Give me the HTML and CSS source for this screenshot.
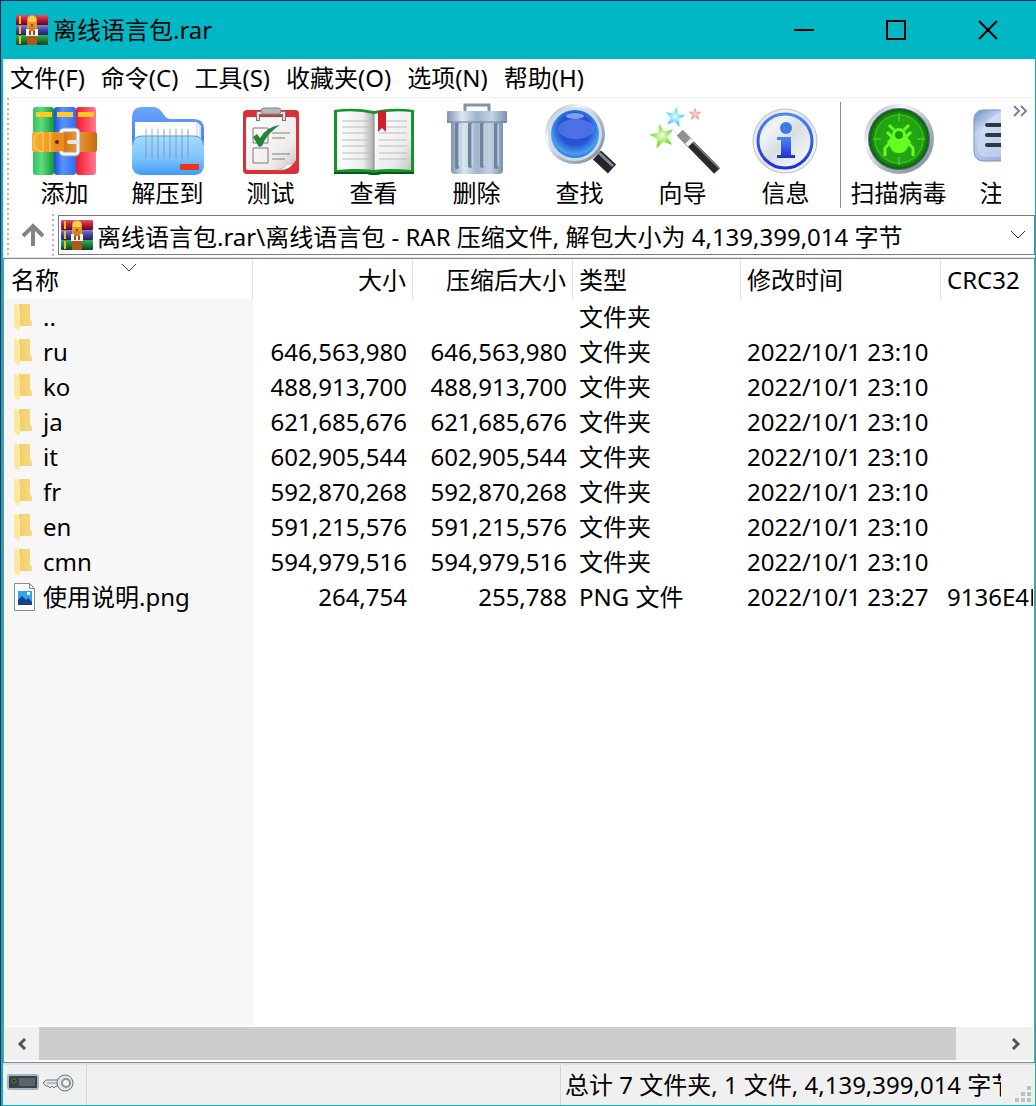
FILE: index.html
```html
<!DOCTYPE html>
<html lang="zh-CN">
<head>
<meta charset="utf-8">
<title>离线语言包.rar</title>
<link rel="stylesheet" href="styles.css">
</head>
<body>
<svg class="defs" aria-hidden="true">
  <defs>
    <linearGradient id="gr"><stop offset="0" stop-color="#2fc45c"/><stop offset=".4" stop-color="#5fdc7c"/><stop offset="1" stop-color="#12973c"/></linearGradient>
    <linearGradient id="bl"><stop offset="0" stop-color="#1b50d8"/><stop offset=".4" stop-color="#5a94ff"/><stop offset="1" stop-color="#2f6df0"/></linearGradient>
    <linearGradient id="rd"><stop offset="0" stop-color="#e0202c"/><stop offset=".4" stop-color="#ff3c50"/><stop offset="1" stop-color="#ff7d92"/></linearGradient>
    <linearGradient id="belt"><stop offset="0" stop-color="#f7b030"/><stop offset=".3" stop-color="#f09a22"/><stop offset=".5" stop-color="#d87312"/><stop offset=".7" stop-color="#f39a28"/><stop offset="1" stop-color="#c76a12"/></linearGradient>
    <linearGradient id="fold" x2="0" y2="1"><stop offset="0" stop-color="#a8dcff"/><stop offset=".6" stop-color="#7cc2fc"/><stop offset="1" stop-color="#3e9cf6"/></linearGradient>
    <linearGradient id="foldb" x2="0" y2="1"><stop offset="0" stop-color="#6aa6ff"/><stop offset="1" stop-color="#3566e8"/></linearGradient>
    <linearGradient id="paper" x2="1" y2="1"><stop offset="0" stop-color="#fff"/><stop offset=".7" stop-color="#ececec"/><stop offset="1" stop-color="#c4c4c4"/></linearGradient>
    <linearGradient id="page"><stop offset="0" stop-color="#fff"/><stop offset=".7" stop-color="#eee"/><stop offset="1" stop-color="#aaa"/></linearGradient>
    <linearGradient id="steel"><stop offset="0" stop-color="#7f95b0"/><stop offset=".25" stop-color="#dbe7f2"/><stop offset=".5" stop-color="#9fb3ca"/><stop offset=".75" stop-color="#c4d3e2"/><stop offset="1" stop-color="#7b91ac"/></linearGradient>
    <linearGradient id="metal" x2="1" y2="1"><stop offset="0" stop-color="#8d9bab"/><stop offset=".3" stop-color="#f5f8fb"/><stop offset=".6" stop-color="#aab6c4"/><stop offset="1" stop-color="#7b8796"/></linearGradient>
    <radialGradient id="lens" cx=".5" cy=".4" r=".65"><stop offset="0" stop-color="#2f55d8"/><stop offset=".5" stop-color="#2353d2"/><stop offset=".8" stop-color="#4aa0f0"/><stop offset="1" stop-color="#1c4fbe"/></radialGradient>
    <linearGradient id="info" x2="0" y2="1"><stop offset="0" stop-color="#4b88ee"/><stop offset="1" stop-color="#1f2fdc"/></linearGradient>
    <linearGradient id="disc" x2="1" y2="1"><stop offset="0" stop-color="#c6d0da"/><stop offset=".3" stop-color="#f2f4f6"/><stop offset=".5" stop-color="#d8dee4"/><stop offset=".8" stop-color="#f4f6f8"/><stop offset="1" stop-color="#b4c0cc"/></linearGradient>
    <radialGradient id="radar"><stop offset="0" stop-color="#25b010"/><stop offset=".8" stop-color="#22a012"/><stop offset="1" stop-color="#0b5d0a"/></radialGradient>
    <radialGradient id="sg"><stop offset="0" stop-color="#f2ffd8"/><stop offset="1" stop-color="#5fdb14"/></radialGradient>
    <radialGradient id="sc"><stop offset="0" stop-color="#e2fdff"/><stop offset="1" stop-color="#2cc9f4"/></radialGradient>
    <radialGradient id="sr"><stop offset="0" stop-color="#ffd6d6"/><stop offset="1" stop-color="#f08488"/></radialGradient>
    <linearGradient id="note" x2="1" y2="1"><stop offset="0" stop-color="#6e8fc8"/><stop offset=".25" stop-color="#c3d3ee"/><stop offset="1" stop-color="#7f9fd6"/></linearGradient>
    <linearGradient id="b1" x2="0" y2="1"><stop offset="0" stop-color="#e05470"/><stop offset=".5" stop-color="#b81838"/><stop offset="1" stop-color="#5e0a1c"/></linearGradient>
    <linearGradient id="b2" x2="0" y2="1"><stop offset="0" stop-color="#7f80d8"/><stop offset=".5" stop-color="#4444a0"/><stop offset="1" stop-color="#22225c"/></linearGradient>
    <linearGradient id="b3" x2="0" y2="1"><stop offset="0" stop-color="#44a860"/><stop offset=".5" stop-color="#15803a"/><stop offset="1" stop-color="#08401c"/></linearGradient>
    <linearGradient id="fy"><stop offset="0" stop-color="#f3cf6a"/><stop offset="1" stop-color="#f8da84"/></linearGradient>
    <path id="star" d="M0-12 3-4 12-4 5 2 8 11 0 6-8 11-5 2-12-4-3-4z"/>
    <symbol id="rar" viewBox="0 0 32 30">
      <rect width="32" height="10" rx="1" fill="url(#b1)"/><rect y="10" width="32" height="10" rx="1" fill="url(#b2)"/><rect y="20" width="32" height="10" rx="1" fill="url(#b3)"/>
      <path d="M3 1h2v8H3zM3 11h2v8H3zM3 21h2v8H3z" fill="#f2c21c"/>
      <path d="M11 4q1-4 5-4t5 4v10H11z" fill="#e8962c"/><path d="M11 21h10v9H11z" fill="#b0581c"/><path d="M12 3q4-4 8 0v4h-8z" fill="#ffd04a"/>
      <path d="M10 14h12v7H10z" fill="#f4f4f4"/><path d="M13 11h6v5h-6z" fill="#d77a20"/><circle cx="16" cy="10" r="1" fill="#5a3210"/><path d="M13 16h2v4h-2zM17 16h2v4h-2z" fill="#8a5030"/>
    </symbol>
    <symbol id="folder" viewBox="0 0 22 28">
      <path d="M5 1h11v15l2 3v4H5z" fill="url(#fy)"/><path d="M0 1h3l3 5v17l-1 5-5-4z" fill="#ffe7a0"/>
    </symbol>
  </defs>
</svg>

<header class="titlebar">
  <svg class="app-icon" aria-hidden="true"><use href="#rar"/></svg>
  <h1 class="title">离线语言包.rar</h1>
  <div class="window-buttons">
    <button class="winbtn" aria-label="最小化"><svg width="20" height="20"><path d="M0 10h20" stroke="#000" stroke-width="2"/></svg></button>
    <button class="winbtn" aria-label="最大化"><svg width="20" height="20"><rect x="1" y="1" width="18" height="18" fill="none" stroke="#000" stroke-width="2"/></svg></button>
    <button class="winbtn" aria-label="关闭"><svg width="20" height="20"><path d="M1 1l18 18M19 1 1 19" stroke="#000" stroke-width="2"/></svg></button>
  </div>
</header>

<nav class="menubar">
  <button class="menu">文件(F)</button>
  <button class="menu">命令(C)</button>
  <button class="menu">工具(S)</button>
  <button class="menu">收藏夹(O)</button>
  <button class="menu">选项(N)</button>
  <button class="menu">帮助(H)</button>
</nav>

<div class="bars">
  <div class="grip"></div>
  <div class="bars-main">
    <div class="toolbar">
      <div class="tools">
        <button class="tool"><svg class="tool-icon" viewBox="23 102 84 76" aria-hidden="true">
          <rect x="33" y="107" width="21" height="68" rx="3" fill="url(#gr)"/><rect x="54" y="107" width="22" height="68" rx="3" fill="url(#bl)"/><rect x="76" y="107" width="20" height="68" rx="3" fill="url(#rd)"/>
          <path d="M36 112h16v5H36zM57 112h16v5H57zM78 112h16v5H78z" fill="#ffcb22"/>
          <rect x="32" y="132" width="65" height="20" rx="2" fill="url(#belt)"/><path d="M43 132q-9 1-9 10t9 10M43 132v20M50 132v20" fill="none" stroke="#ffd46a" stroke-width="1"/>
          <rect x="61" y="130" width="17" height="24" rx="3" fill="none" stroke="#9aa0a8" stroke-width="5"/><rect x="61" y="130" width="17" height="24" rx="3" fill="none" stroke="#f3f4f6" stroke-width="3"/>
          <path d="M54 133h10v18H54z" fill="#e88a1e"/><circle cx="57" cy="142" r="2" fill="#5a2c08"/><rect x="67" y="140" width="12" height="4" rx="2" fill="#e4e6ea"/>
        </svg>添加</button>
        <button class="tool"><svg class="tool-icon" viewBox="126 102 84 76" aria-hidden="true">
          <path d="M132 118q0-11 10-11h11q5 0 9 5 4 7 8 7h24q10 0 10 10v36h-72z" fill="url(#foldb)"/><path d="M135 122h62l4 4v20h-66z" fill="#fff"/><path d="M197 122v24M200 125v20" stroke="#b8c4dc"/>
          <rect x="132" y="136" width="72" height="39" rx="9" fill="url(#fold)"/><path d="M133 145q0-9 9-9h52q9 0 9 9" fill="none" stroke="#4f9df0"/>
          <path d="M146 129v30M152 129v30M158 129v30M164 129v30M170 129v30M176 129v30M182 129v30M188 129v30" stroke="#7892ae" stroke-opacity=".4" stroke-width="2"/><rect x="180" y="164" width="19" height="6" rx="1" fill="#ee3418"/>
        </svg>解压到</button>
        <button class="tool"><svg class="tool-icon" viewBox="229 102 84 76" aria-hidden="true">
          <rect x="243" y="110" width="56" height="64" rx="4" fill="#db2f35"/><path d="M248 117h46q2 0 2 2v41q-8 10-18 10h-30q-2 0-2-2v-49q0-2 2-2z" fill="url(#paper)"/><path d="M296 160q-3 6-9 4-1 4-9 6 12 1 18-10z" fill="#fff" stroke="#aaa" stroke-width=".5"/>
          <path d="M258 121v-8h26v8" fill="none" stroke="#777" stroke-width="4"/><path d="M258 120v-7h26v7" fill="none" stroke="#ddd" stroke-width="2"/><rect x="261" y="108" width="20" height="6" rx="3" fill="#b6b9bb" stroke="#858585"/>
          <path d="M253 128h15v15h-15zM253 148h15v15h-15z" fill="none" stroke="#8b7777"/><path d="M272 133h18M272 138h13M272 154h18M272 159h13" stroke="#8e7b7b"/><path d="M253 137l4-3 3 4q6-11 20-13-13 8-18 21l-3 1z" fill="#238634"/>
        </svg>测试</button>
        <button class="tool"><svg class="tool-icon" viewBox="332 102 84 76" aria-hidden="true">
          <path d="M334 110q20-3 40 1 20-4 40-1v64h-33q-7 2-14 0h-33z" fill="#12962a"/><path d="M334 172h34q6 2 12 0h34v2h-33q-7 2-14 0h-33z" fill="#075814"/><path d="M337 112q20-2 37 2v56q-17-2-37 0z" fill="url(#page)"/><path d="M411 112q-20-2-37 2v56q17-2 37 0z" fill="url(#paper)"/>
          <path d="M342 121h28M342 127h28M342 133h28M342 140h28M342 146h28M342 153h28M342 159h28M379 121h28M379 127h28M379 133h28M379 140h28M379 146h28M379 153h28M379 159h28" stroke="#bcbcbc" stroke-width="1"/><path d="M374 114v56" stroke="#888"/><path d="M378 111h8v21l-4-4-4 4z" fill="#cf2027"/>
        </svg>查看</button>
        <button class="tool"><svg class="tool-icon" viewBox="435 102 84 76" aria-hidden="true">
          <path d="M465 112v-7h24v7" fill="none" stroke="#8494a8" stroke-width="3"/><path d="M451 122h52v48q0 4-4 4h-44q-4 0-4-4z" fill="url(#steel)"/><path d="M457 124v43M470 124v42M482 124v42M496 124v43" stroke="#6a84a2" stroke-width="4" stroke-linecap="round"/><path d="M459 124v42M472 124v42M484 124v42M498 124v42" stroke="#d8e4f0" stroke-width="1"/>
          <rect x="447" y="111" width="60" height="12" rx="1" fill="url(#steel)"/><path d="M447 122h60" stroke="#607993"/>
        </svg>删除</button>
        <button class="tool"><svg class="tool-icon" viewBox="538 102 84 76" aria-hidden="true">
          <path d="M597 155l15 14" stroke="#22252b" stroke-width="12"/><path d="M598 152l15 14" stroke="#858b94" stroke-width="3"/><circle cx="575" cy="134" r="30" fill="url(#metal)"/><circle cx="575" cy="134" r="27" fill="#c9dcec"/><circle cx="575" cy="134" r="24" fill="url(#lens)"/><ellipse cx="576" cy="129" rx="18" ry="10" fill="#829bff" fill-opacity=".4"/><ellipse cx="575" cy="116" rx="9" ry="3" fill="#d7edff" fill-opacity=".5"/>
        </svg>查找</button>
        <button class="tool"><svg class="tool-icon" viewBox="641 102 84 76" aria-hidden="true">
          <use href="#star" transform="translate(662 136) rotate(-12)" fill="url(#sg)"/><use href="#star" transform="translate(675 117) rotate(10) scale(.8)" fill="url(#sc)"/><use href="#star" transform="translate(695 114) scale(.55)" fill="url(#sr)"/>
          <path d="M680 133l37 38" stroke="#29292b" stroke-width="8"/><path d="M682 131l37 37" stroke="#77797d" stroke-width="2"/><path d="M680 133l10 10" stroke="#909296" stroke-width="8"/><path d="M688 141l3 3" stroke="#f2f2f2" stroke-width="8"/>
        </svg>向导</button>
        <button class="tool"><svg class="tool-icon" viewBox="744 102 84 76" aria-hidden="true">
          <circle cx="785" cy="141" r="32" fill="url(#disc)" stroke="#b7c1cb"/><circle cx="785" cy="141" r="27" fill="none" stroke="url(#info)" stroke-width="3"/><circle cx="786" cy="128" r="6" fill="#3f7be8"/><path d="M777 137h14v18h4v3h-18v-3h4v-15h-4z" fill="url(#info)"/>
        </svg>信息</button>
        <div class="separator"></div>
        <button class="tool wide"><svg class="tool-icon" viewBox="857 102 84 76" aria-hidden="true">
          <circle cx="899" cy="139" r="35" fill="url(#metal)"/><circle cx="899" cy="139" r="31" fill="#5d6874"/><circle cx="899" cy="139" r="30" fill="url(#radar)"/><circle cx="899" cy="139" r="24" fill="none" stroke="#3dcb24"/><path d="M899 113v8M899 157v8M873 139h8M917 139h8" stroke="#35c81d" stroke-width="2"/>
          <path d="M892 150l-5-8 4-5h16l4 5-5 8q-2 3-7 3t-7-3z" fill="#66ff22"/><circle cx="899" cy="135" r="7" fill="#66ff22"/><circle cx="899" cy="135" r="4" fill="#229a12"/><path d="M894 130l-5-5M904 130l5-5M892 137l-5-5M906 137l5-5M890 143l-5 5v8M908 143l5 5v8" fill="none" stroke="#66ff22" stroke-width="3"/>
        </svg>扫描病毒</button>
        <button class="tool wide"><svg class="tool-icon" viewBox="962 102 84 76" aria-hidden="true">
          <rect x="974" y="110" width="60" height="51" rx="9" fill="url(#note)" stroke="#7590ba"/><path d="M978 148q0-25 22-35h20v44h-36q-6-1-6-9z" fill="#e4ecf8" fill-opacity=".4"/><path d="M987 125h36M987 135h36M987 145h36" stroke="#2b3848" stroke-width="4" stroke-linecap="round"/>
        </svg>注释</button>
      </div>
      <button class="more" aria-label="更多"><svg width="16" height="12"><path d="M2 1l5 5-5 5M9 1l5 5-5 5" fill="none" stroke="#7c7cb4" stroke-width="2"/></svg></button>
    </div>
    <div class="addressbar">
      <button class="up" aria-label="向上"><svg width="24" height="24"><path d="M12 23V3M2 13 12 3l10 10" fill="none" stroke="#848484" stroke-width="4"/></svg></button>
      <div class="grip small"></div>
      <div class="address">
        <svg class="app-icon" aria-hidden="true"><use href="#rar"/></svg>
        <input class="path" aria-label="地址" value="离线语言包.rar\离线语言包 - RAR 压缩文件, 解包大小为 4,139,399,014 字节">
        <button class="drop" aria-label="展开"><svg width="14" height="8"><path d="M0 0l7 7 7-7" fill="none" stroke="#333"/></svg></button>
      </div>
    </div>
  </div>
</div>

<main class="list">
  <div class="rows">
    <table class="files">
      <colgroup><col class="c-name"><col class="c-size"><col class="c-size"><col class="c-type"><col class="c-time"><col class="c-crc"></colgroup>
      <thead><tr><th>名称<svg class="sort" width="14" height="8" aria-hidden="true"><path d="M0 0l7 7 7-7" fill="none" stroke="#444"/></svg></th><th class="num">大小</th><th class="num">压缩后大小</th><th>类型</th><th>修改时间</th><th>CRC32</th></tr></thead>
      <tbody>
        <tr><td><span class="name"><svg class="file-icon"><use href="#folder"/></svg>..</span></td><td></td><td></td><td>文件夹</td><td></td><td></td></tr>
        <tr><td><span class="name"><svg class="file-icon"><use href="#folder"/></svg>ru</span></td><td class="num">646,563,980</td><td class="num">646,563,980</td><td>文件夹</td><td>2022/10/1 23:10</td><td></td></tr>
        <tr><td><span class="name"><svg class="file-icon"><use href="#folder"/></svg>ko</span></td><td class="num">488,913,700</td><td class="num">488,913,700</td><td>文件夹</td><td>2022/10/1 23:10</td><td></td></tr>
        <tr><td><span class="name"><svg class="file-icon"><use href="#folder"/></svg>ja</span></td><td class="num">621,685,676</td><td class="num">621,685,676</td><td>文件夹</td><td>2022/10/1 23:10</td><td></td></tr>
        <tr><td><span class="name"><svg class="file-icon"><use href="#folder"/></svg>it</span></td><td class="num">602,905,544</td><td class="num">602,905,544</td><td>文件夹</td><td>2022/10/1 23:10</td><td></td></tr>
        <tr><td><span class="name"><svg class="file-icon"><use href="#folder"/></svg>fr</span></td><td class="num">592,870,268</td><td class="num">592,870,268</td><td>文件夹</td><td>2022/10/1 23:10</td><td></td></tr>
        <tr><td><span class="name"><svg class="file-icon"><use href="#folder"/></svg>en</span></td><td class="num">591,215,576</td><td class="num">591,215,576</td><td>文件夹</td><td>2022/10/1 23:10</td><td></td></tr>
        <tr><td><span class="name"><svg class="file-icon"><use href="#folder"/></svg>cmn</span></td><td class="num">594,979,516</td><td class="num">594,979,516</td><td>文件夹</td><td>2022/10/1 23:10</td><td></td></tr>
        <tr><td><span class="name"><svg class="file-icon" viewBox="0 0 22 28"><path d="M.5.500h15l5 5v22H.5z" fill="#fff" stroke="#8c8c8c"/><path d="M15.500.500v5h5" fill="none" stroke="#8c8c8c"/><rect x="4" y="8" width="14" height="14" fill="#2fa5ea"/><path d="M4 17l4-4 4 4 2-2 4 4v3H4z" fill="#1b3f8c"/><rect x="13" y="9" width="3" height="3" fill="#fff"/></svg>使用说明.png</span></td><td class="num">264,754</td><td class="num">255,788</td><td>PNG 文件</td><td>2022/10/1 23:27</td><td>9136E4B8</td></tr>
      </tbody>
    </table>
  </div>
  <div class="scrollbar">
    <button class="scroll-btn" aria-label="向左滚动"><svg width="10" height="12"><path d="M8 1 3 6l5 5" fill="none" stroke="#555" stroke-width="3"/></svg></button>
    <div class="track"><div class="thumb"></div></div>
    <button class="scroll-btn" aria-label="向右滚动"><svg width="10" height="12"><path d="M2 1l5 5-5 5" fill="none" stroke="#555" stroke-width="3"/></svg></button>
  </div>
</main>

<footer class="status">
  <div class="status-icons">
    <svg width="32" height="16" aria-hidden="true"><rect x="1" y="1" width="30" height="14" rx="2" fill="#3c4147" stroke="#a3b3c0" stroke-width="2"/><rect x="12" y="4" width="16" height="8" fill="#5c626a"/><circle cx="7" cy="7" r="2" fill="#123d0c" stroke="#4b8a36"/></svg>
    <svg width="32" height="18" aria-hidden="true"><path d="M20 6H4L1 9l3 3h2l2 2 2-2 2 2 2-2h7z" fill="#e4e8ea" stroke="#6c767c"/><path d="M5 9h14" stroke="#8a9499"/><circle cx="23" cy="9" r="8" fill="#dfe6e9" stroke="#6c767c"/><circle cx="24" cy="9" r="4" fill="#f2f2f2" stroke="#89949a" stroke-width="2"/></svg>
  </div>
  <div class="status-mid"></div>
  <div class="status-total"><span class="total-text">总计 7 文件夹, 1 文件, 4,139,399,014 字节</span></div>
  <svg class="resize" width="16" height="16" aria-hidden="true"><path d="M12 0h4v4h-4zM6 6h4v4H6zM12 6h4v4h-4zM0 12h4v4H0zM6 12h4v4H6zM12 12h4v4h-4z" fill="#bfbfbf"/></svg>
</footer>
</body>
</html>
```
FILE: styles.css
```css
* { box-sizing: border-box; }

body {
  margin: 0;
  min-height: 100vh;
  display: flex;
  flex-direction: column;
  padding: 1px 1px 1px 3px;
  background: linear-gradient(90deg, #0b2a5a 1px, #00b7c6 1px);
  border-top: 1px solid #0b2a5a;
  font: 24px/30px "Noto Sans", "Noto Sans CJK SC", sans-serif;
  color: #000;
}

svg { display: block; flex: none; }
.defs { position: absolute; width: 0; height: 0; }

button {
  font: inherit;
  color: inherit;
  background: none;
  border: 0;
  padding: 0;
}

.titlebar {
  display: flex;
  align-items: center;
  height: 57px;
  padding: 0 1px 2px 13px;
  background: #00b7c6;
}
.app-icon { width: 32px; height: 30px; }
.title { margin: 0 0 0 5px; flex: 1; font: inherit; }
.window-buttons { display: flex; }
.winbtn {
  display: flex;
  width: 92px;
  height: 54px;
  align-items: center;
  justify-content: center;
}

.menubar {
  display: flex;
  gap: 16px;
  height: 39px;
  padding: 4px 7px;
  background: #fff;
  border-bottom: 1px solid #f0f0f0;
}

.bars {
  display: flex;
  gap: 4px;
  padding-left: 4px;
  background: #fff;
  border-bottom: 1px solid #e4e4e4;
}
.grip {
  width: 2px;
  background: repeating-linear-gradient(#b8b8b8 0 2px, #fff 2px 5px);
}
.grip.small { height: 42px; }
.bars-main { flex: 1; min-width: 0; }

.toolbar { display: flex; padding-top: 4px; }
.tools { display: flex; flex: 1; min-width: 0; overflow: hidden; }
.tool {
  display: flex;
  flex: none;
  flex-direction: column;
  align-items: center;
  width: 103px;
  white-space: nowrap;
}
.tool.wide { width: 105px; }
.tool-icon { width: 84px; height: 76px; }
.separator { flex: none; width: 1px; margin: 0 5px 0 3px; background: #8c8c8c; }
.more { width: 34px; height: 18px; padding-left: 11px; }

.addressbar { display: flex; align-items: center; height: 49px; padding-top: 5px; }
.up { width: 39px; padding-left: 8px; }
.address {
  display: flex;
  flex: 1;
  align-items: center;
  height: 40px;
  margin-left: 4px;
  padding: 0 9px 0 2px;
  border: 1px solid #7a7a7a;
  background: #fff;
}
.path {
  flex: 1;
  min-width: 0;
  height: 36px;
  margin-left: 4px;
  padding: 0;
  border: 0;
  outline: 0;
  background: none;
  font: inherit;
  color: inherit;
}

.list {
  display: flex;
  flex: 1;
  flex-direction: column;
  padding-bottom: 2px;
  border: 1px solid #828790;
  background: #fff;
}
.rows {
  flex: 1;
  overflow: hidden;
  margin: 0 1px;
  background: linear-gradient(#f7f7f7, #f7f7f7) 0 0 / 248px 100% no-repeat;
}
.files {
  width: 1200px;
  table-layout: fixed;
  border-collapse: separate;
  border-spacing: 0;
}
.c-name { width: 248px; }
.c-size { width: 160px; }
.c-type { width: 168px; }
.c-time { width: 200px; }
th {
  position: relative;
  height: 40px;
  padding: 2px 6px 0;
  border-right: 1px solid #e3e3e3;
  background: #fff;
  font-weight: 400;
  text-align: left;
}
td { height: 35px; padding: 0 6px; white-space: nowrap; }
.num { text-align: right; }
.sort { position: absolute; top: 5px; left: 117px; }
.name { display: flex; align-items: center; gap: 7px; padding-left: 3px; }
.file-icon { width: 22px; height: 28px; }

.scrollbar { display: flex; height: 33px; margin: 1px 1px 0; background: #f0f0f0; }
.scroll-btn { display: flex; width: 34px; align-items: center; justify-content: center; }
.track { flex: 1; display: flex; padding-right: 43px; }
.thumb { flex: 1; background: #cdcdcd; }

.status {
  display: flex;
  height: 42px;
  border-top: 2px solid #e2e2e2;
  background: #f0f0f0;
}
.status-icons {
  display: flex;
  gap: 3px;
  width: 84px;
  padding: 9px 0 0 4px;
  border-right: 1px solid #d4d4d4;
}
.status-mid { flex: 1; border-right: 1px solid #d4d4d4; }
.status-total { width: 440px; padding: 5px 0 0 4px; }
.total-text { display: block; overflow: hidden; white-space: nowrap; }
.resize { margin: 21px 4px 0 14px; }
```
